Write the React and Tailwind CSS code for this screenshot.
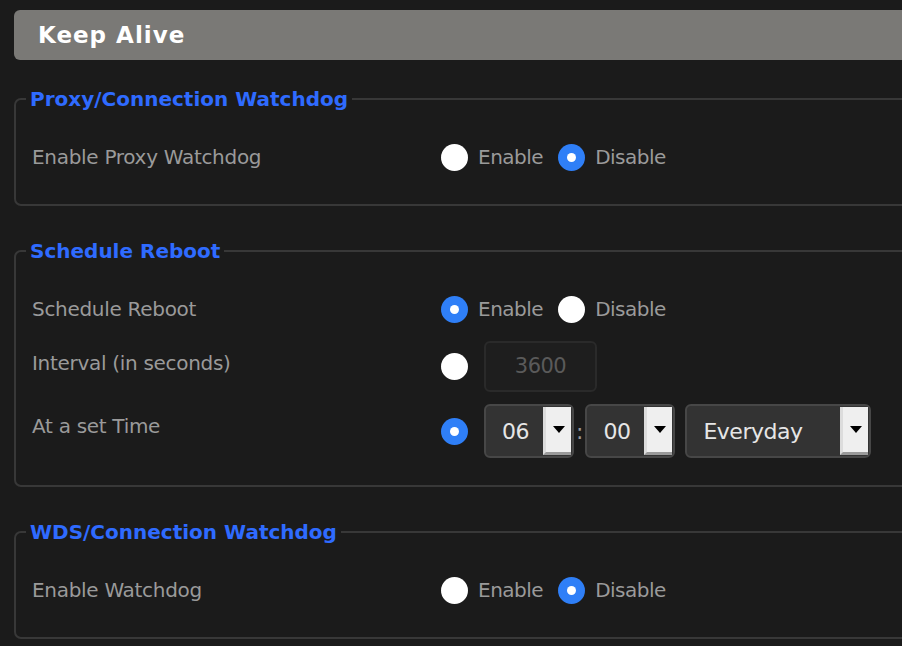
import React from 'react';

const labelFont = { fontFamily: '"DejaVu Sans", Verdana, sans-serif' };

function Radio({ checked }) {
  return checked ? (
    <span className="flex h-[27px] w-[27px] shrink-0 items-center justify-center rounded-full bg-[#2f7ff7]">
      <span className="h-[9px] w-[9px] rounded-full bg-white" />
    </span>
  ) : (
    <span className="h-[27px] w-[27px] shrink-0 rounded-full bg-white" />
  );
}

function RadioPair({ value }) {
  return (
    <div className="flex items-center text-[20px] tracking-[-0.5px] text-[#9a9a9a]">
      <Radio checked={value === 'enable'} />
      <span className="ml-[10px]">Enable</span>
      <span className="ml-[15px]" />
      <Radio checked={value === 'disable'} />
      <span className="ml-[10px]">Disable</span>
    </div>
  );
}

function Select({ value, width }) {
  return (
    <div className={`flex h-[54px] items-stretch rounded-[6px] border-2 border-[#474747] bg-[#333333] ${width}`}>
      <span className="flex flex-1 items-center pl-[16px] text-[22px] tracking-[-0.5px] text-[#e6e6e6]">{value}</span>
      <span className="mt-[1px] mb-[1px] mr-[1px] flex w-[28px] items-center justify-center border-b-[3px] border-l-[3px] border-b-[#9a9a9a] border-l-[#dcdcdc] bg-[#efefef]">
        <svg width="12" height="8" viewBox="0 0 12 8">
          <path d="M0 0 L12 0 L6 7 Z" fill="#000" />
        </svg>
      </span>
    </div>
  );
}

function Row({ label, children, top = 'pt-0' }) {
  return (
    <div className="flex items-start">
      <div className={`w-[409px] shrink-0 text-[20px] leading-[40px] tracking-[-0.3px] text-[#9a9a9a] ${top}`}>{label}</div>
      <div className="flex min-h-[40px] items-center">{children}</div>
    </div>
  );
}

function Section({ title, children }) {
  return (
    <fieldset className="rounded-[7px] border-2 border-[#383838] pr-4 pb-[27px] pl-[16px]">
      <legend className="ml-[-6px] px-[4px] text-[20px] font-bold leading-[26px] text-[#2f6bff]">
        {title}
      </legend>
      <div className="flex flex-col gap-[12px] pt-[25px]">{children}</div>
    </fieldset>
  );
}

export default function App() {
  return (
    <div className="h-[646px] w-[902px] overflow-hidden bg-[#1b1b1b]" style={labelFont}>
      <div className="w-[1000px] pt-[10px] pl-[14px]">
        <div className="flex h-[50px] items-center rounded-l-[6px] bg-[#7a7976] pl-[24px] text-[23px] font-bold tracking-[1px] text-white">
          Keep Alive
        </div>

        <div className="mt-[26px] flex flex-col gap-[32px]">
          <Section title="Proxy/Connection Watchdog">
            <Row label="Enable Proxy Watchdog">
              <RadioPair value="disable" />
            </Row>
          </Section>

          <Section title="Schedule Reboot">
            <Row label="Schedule Reboot">
              <RadioPair value="enable" />
            </Row>
            <Row label="Interval (in seconds)" top="pt-[2px]">
              <Radio checked={false} />
              <div className="ml-[16px] flex h-[51px] w-[113px] items-center justify-center rounded-[6px] border-2 border-[#2a2a2a] bg-[#1e1e1e] text-[21px] tracking-[-0.5px] text-[#5a5a5a]">
                3600
              </div>
            </Row>
            <Row label="At a set Time" top="pt-[2px]">
              <Radio checked={true} />
              <div className="ml-[16px] flex items-center">
                <Select value="06" width="w-[90px]" />
                <span className="mx-[2px] text-[22px] text-[#9a9a9a]">:</span>
                <Select value="00" width="w-[90px]" />
                <div className="ml-[10px]">
                  <Select value="Everyday" width="w-[186px]" />
                </div>
              </div>
            </Row>
          </Section>

          <Section title="WDS/Connection Watchdog">
            <Row label="Enable Watchdog">
              <RadioPair value="disable" />
            </Row>
          </Section>
        </div>
      </div>
    </div>
  );
}
